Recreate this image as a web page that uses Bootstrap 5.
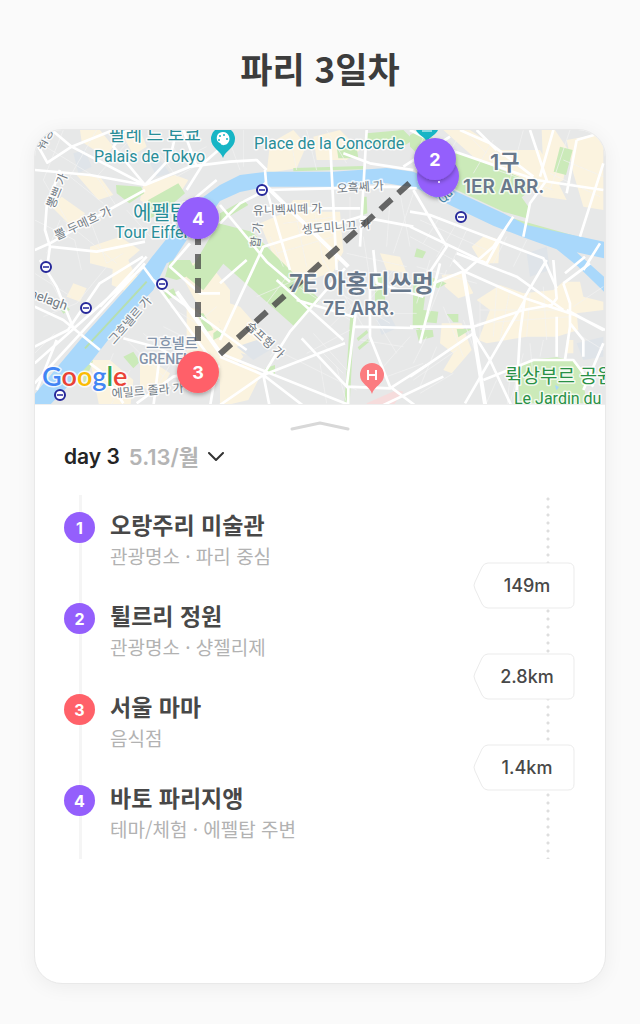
<!DOCTYPE html>
<html lang="ko">
<head>
<meta charset="utf-8">
<meta name="viewport" content="width=device-width, initial-scale=1">
<title>파리 3일차</title>
<link href="https://cdn.jsdelivr.net/npm/bootstrap@5.3.0/dist/css/bootstrap.min.css" rel="stylesheet">
<style>
body{background:#fafafa;font-family:Inter,"Noto Sans CJK KR",sans-serif;color:#484848}
.page{min-height:100vh;padding:44px 34px 40px}
.page-title{font:700 35px/48px "Noto Sans CJK KR",sans-serif;color:#3c3c3c;margin-bottom:37px}
.trip-card{border:1px solid #e9e9e9;border-radius:28px;box-shadow:0 3px 20px rgba(0,0,0,.06);overflow:hidden}
.city-map{width:100%;height:auto;background:#e7e8e8;border-bottom:1px solid #eee}
.city-map text{font-family:Roboto,"Noto Sans CJK KR",sans-serif;paint-order:stroke;stroke:#fff;stroke-opacity:.8;stroke-width:3px;stroke-linejoin:round}
.city-map .poi{fill:#288d98;font-size:16px}
.city-map .area{fill:#68788b;font-weight:600}
.city-map .area text{font-family:Inter,"Noto Sans CJK KR",sans-serif}
.city-map .street{fill:#727b84;font-size:12px;stroke-width:2px}
.city-map .pin-no{font:700 18px Inter,sans-serif;fill:#fff;stroke:none}
.plan{padding:16px 30px 0 29px}
.icon-btn{background:none;border:0;padding:0}
.day-btn{font-size:21px;line-height:32px;font-weight:600;color:#242424;gap:9px;margin-bottom:22px}
.day-date{color:#b4b4b4;font-size:22px}
.stops{background:linear-gradient(#f5f5f5,#f5f5f5) 15px 0/3px 100% no-repeat}
.stop{height:91px;gap:15px;padding-top:17px}
.stop-no{width:31px;height:31px;background:#945ffc;color:#fff;font-size:16px;font-weight:700}
.stop-food{background:#ff6169}
.stop-name{font:700 23px/24px "Noto Sans CJK KR",sans-serif;color:#484848}
.stop-kind{font:400 19px/26px "Noto Sans CJK KR",sans-serif;color:#b2b2b2;margin-top:7px}
.legs{width:102px;padding-top:67px;gap:44px;background:radial-gradient(circle,#dedede 1px,transparent 2px) 73px 0/4px 8px repeat-y}
.leg{width:102px;height:47px;font-size:18px;font-weight:500;padding-left:6px}
</style>
</head>
<body>
<main class="page d-flex flex-column">
<h1 class="page-title text-center">파리 3일차</h1>
<section class="trip-card bg-white flex-grow-1 d-flex flex-column">
<svg class="city-map d-block" viewBox="35 130 570 274" role="img" aria-label="파리 지도">
<defs>
<filter id="lift" x="-30%" y="-30%" width="160%" height="160%"><feDropShadow dx="0" dy="2" stdDeviation="2" flood-opacity=".3"/></filter>
<g id="metro"><circle r="5" fill="#fff" stroke="#26289a" stroke-width="2"/><path d="M-3 0h6" stroke="#5a5cb4" stroke-width="2"/></g>
</defs>
<svg x="30" y="120" width="600" height="290" viewBox="0 0 1800 870">
<!-- built-up blocks -->
<g fill="#fbf3df">
<path d="M150 30l60 0 40 50-25 30-70-45zM140 165l70 5 40 55-45 15zM340 195l95-30 40 15-25 40-90 40-30-20zM65 260l30-30 70 50-40 40zM180 380l90-30 60 40-70 60-80-20zM270 30h60l20 50-40 25z"/>
<path d="M250 420h45l20 45 80 20-60 50-90-40zM440 440l90-20 70 90 0 90-60 10-45-70zM470 560l80 20 90 130-60 70-110-20zM180 720l60 0 70 60-10 90H210zM330 700l90 60-30 60-60-20zM130 490l40 15-20 40-40-15z"/>
<g transform="translate(570)"><path d="M120 310l70-30 30-40h50v35h90l10 120-30 60-200 70-40-60 55-70zM150 70l70-40 40 45-30 70-90 15zM280 50l80-20 60 60-40 30h-90zM480 400l60 10 20 50-60-10zM0 540l60 20 80 90-40 60-100-30zM0 740l80-10 45 30-40 80-85 20z"/></g>
<g transform="translate(1140)"><path d="M100 30l80 0 90 60 120 0 40 70 40 80-70-10-110-80-100-40zM395 30l40 0 40 60-15 90-45 25-15-50zM470 60l110-20v230l-60-10-30-100zM225 345l45 15-5 70-50 0-30-50z"/></g>
<g transform="translate(1140 420)"><path d="M200 120l70-45 70 25 90-10 30-25h50l10 45 60 15v25l-80 10 5 50-65 20h-90l-120 20-25-10 35-90zM95 45l65-5 30 60-45 15-40-35zM95 190l60 0 30 80-60 70-25-10 30-50-40-30zM215 0h35l-15 15zM470 240h20v40h-20z"/></g>
</g>
<!-- parks -->
<g fill="#cbeab9">
<path d="M258 195l75 5 10 20-45 30-38-30zM355 240l90-50 20 30-65 55-60 30z"/>
<path d="M565 310l100 25 205 204-75 82-215-190-60 80-50-40z"/>
<path d="M420 420h60l20 40-60 20-35-10zM400 520l30-15 10 20-30 15zM90 565l20-8 10 12-20 12zM280 710l30-15 20 30-20 20zM500 580l20 0 30 50-20 5zM550 640l20-15 10 20-30 15z"/>
<g transform="translate(570)"><path d="M0 280l70-40 15 15-85 50zM220 144l210-6v10l-210 6zM350 80l60 0 5 35-60 0zM440 40l110-10 30 30-40 25-100-15zM430 230l10 0 2 50-14 5z"/></g>
<g transform="translate(1140)"><path d="M0 45l30-15 100 60 220 90 10 32-25 20 20 28-5 35-70-20-140-65L0 80zM450 80l38 10-20 75-37-10zM20 385l28 10-10 20-25-5zM290 290l220 62-10 5-225-60z"/></g>
<g transform="translate(570 420)"><path d="M392 150l12 2-15 280h-16zM410 235l30-25 5 8-30 25zM413 262l30-25 5 8-30 25zM465 45h30v80h-30zM580 50l20 0v160l-22-10zM135 325l30-10 0 30-25-5z"/></g>
<g transform="translate(1140 420)"><path d="M10 115l35-5-5 40 45 5-5 35-30-3-5 10-35 0zM110 162h35v25h-15zM18 210l50 0 3 20-45 12zM140 207h45l-40 25zM330 430l-5-70 12-45 43-18 60-5 50 10 32 48 5 80zM60 50l50 20-25 15-25-10z"/></g>
<path d="M160 745l30-25-30 80z"/>
</g>
<g fill="#dfe4e9"><path d="M130 100l35-10 20 50-40 20zM360 130l30-10 30 40-40 10zM1490 400l60-20 10 70-60 20zM1640 670l80-20v60l-60 10zM1040 600l40-15 20 40-45 20zM620 680l60-20 40 30-50 30z"/></g>
<path d="M1010 850l90-40 20 5-40 55h-70z" fill="#f6dcdc"/>
<!-- river -->
<path d="M12 825L150 660 330 460 365 412 400 368 500 245 570 195 630 165 710 155H910L1070 144 1150 155 1280 215 1420 280 1490 315 1722 365V415L1640 397 1722 470V515L1645 440 1580 388 1480 352 1390 317 1270 260 1160 205 1070 190 910 200H710L630 216 570 243 540 285 480 345 430 420 410 430 370 510 250 640 180 730 50 865 12 880z" fill="#a9d8fb"/>
<path d="M165 685L350 485" stroke="#b6dfae" stroke-width="6"/>
<path d="M1575 795l12 6-8 10z" fill="#a9d8fb"/>
<!-- lanes -->
<g fill="none" stroke="#f3f3f3" stroke-width="2">
<path d="M14 60l180 110M100 30l-60 150 70 120M200 30l-80 140 100 80M260 260l-60-90 90-100M14 300l120 60 20 90M100 300l160 130M14 460l110 70M40 590l100-40 90-110M14 700l60-60M90 300l-40 100M180 300l50 130 50-30M290 270l80 90M420 60l30 60 80-40M380 90l60 80 90-50M400 620l120 60M340 640l140 120M290 660l110 110M420 560l80 50 60-50M250 700l-40 100M300 750l-60 110M380 800l80-130M60 480l80 150"/>
<path d="M590 40l40 110M640 30l0 110M780 50l20 100M830 30l30 120M890 30l60 100M720 350l40 90M790 250l40 190M850 250l30 180M760 310l160 -20M740 400l170-50M960 230l0 110M1080 240l-10 140M1110 220l30 160M1150 220l-60 180M950 400l180 40M1000 350l20 130M680 530l140-60M710 550l60-80M790 490l170 110M880 420l120 200M930 520l150 90M970 600l120-150M900 620l80-80M850 640l100 110M830 700l130-70M880 700l60 60M780 640l-60 70M760 700l220 110M870 730l20 120M920 740l30 110M1040 600l60 100M1060 580l100 0M990 660l130 20M1060 740l80-90M1070 770l110-40"/>
<path d="M1190 30l-30 70M1280 60l-40 70M1310 40l60 60M1390 60l-60 100M1400 150l170 60M1480 30l-40 150M1620 30l-60 180M1600 120l120 50M1560 160l150 70M1230 290l-50 80M1280 310l-60 100M1310 330l-50 110M1170 300l200 90M1140 350l150 80M1430 350l-40 80M1490 360l-40 80M1160 440l180 50M1200 420l-40 130M1250 450l-60 150M1300 600l60 160M1240 560l60 150M1350 540l0 120M1400 500l-10 150M1440 510l-30 150M1500 520l-10 130M1540 500l10 160M1350 570l260 0M1340 610l280-20M1500 670l10 110M1540 660l-10 50M1150 780l130-90M1170 820l100-60M1400 780l-40 90M1440 770l-10 100M1480 700l-40 150M1630 560l90-60M1640 640l80 50M1190 650l-40 80M1220 680l-50 120"/>
</g>
<!-- avenues -->
<g fill="none" stroke="#fff" stroke-width="8" stroke-linejoin="round">
<path d="M14 150L180 165 345 195 480 140 600 125 680 120 710 150M90 150L50 260 45 330 60 380 50 450M345 210L200 290 60 370 14 390M60 380L200 395 345 365M65 30l60 50 220 115M125 80L52 128 14 60M125 80L250 30M345 195L250 80 285 30M345 195l75-80 20-85M460 30l40 110M470 210l50-80 80-70M400 350l100-120 60-50"/>
<path d="M14 560L100 600 210 690M30 420l50 80 50 125M14 680l100-50 95-140 130-80M14 730L340 440M14 790L345 430M20 810l60-150M340 440L560 740M560 740L540 860M370 480l60 50 220 160M180 730l40 30 60 90M280 655l110 30 100 60M390 700l-20 160M320 850l110-80 140-30M480 370l-60 70 90 80 60 0M350 410L210 560"/>
<path d="M570 310l60-60 80-40 190-5 180-5 80 5M705 150l5 60 70 240M570 255l140 170 70 60M570 660L700 380 860 330 990 290 1150 320M690 265l300 0M900 60l20 390M1010 30l-20 350M940 100l80 30 130 20M1030 390l10 100 140 40M570 490l80-70M800 540l170 50M740 480l200 180M945 670L700 765 570 710M700 765l80-130 165-190M700 765l130 100M700 765l-130 90M700 765l20 100M570 700l400 160M815 655l140 150 0 60M980 550l-30 250 130 5 110-70M1050 860l190-90M1020 500l0 150 60 150 80 60M970 620l180 4"/>
<path d="M1260 50L1120 140M1290 30l90 40 130 100M1340 30l60 60M1140 30l120 60 260 90 200 30M1500 30l50 150-50 70-20 100M1570 30l-40 140M1640 60l70-20M1640 60l-30 160M1720 130l-70 220M1450 290l-60 90-80 70-100 40M1280 400l180 70 140 100M1140 275l60 10 340 130 40 90M1150 210l100 170-60 90M1140 320l230 110 60-110M1710 370l-50 80"/>
<path d="M1140 620h190l150-50 85-15 15-20L1570 420M1270 420l35 35 180 80 150 50 90 45M1550 420l-65 110-15 110-10 170M1485 540l-180 310M1600 490l20 60 0 70-15 100M1600 490l80-60M1605 460l60-50M1330 640L1140 770M1330 640l50 80 70 150M1230 430l-60 240M1580 590l0 120M1620 610l40 50 0 50M1720 670l-60 140M1610 570l110 60M1360 780l150-60 120 0 60 80"/>
<path d="M440 515L575 705M1300 455l30 180 38 235M955 440L700 190" stroke-width="12"/>
</g>
</svg>
<!-- labels -->
<g class="poi"><text x="109" y="141" font-size="18">팔레 드 토쿄</text><text x="94" y="162">Palais de Tokyo</text><text x="254" y="149">Place de la Concorde</text><text x="133" y="220" font-size="20">에펠탑</text><text x="115" y="238">Tour Eiffel</text></g>
<g fill="#8494aa" font-size="14" font-weight="500"><text x="146" y="348">그흐넬르</text><text x="139" y="364">GRENELLE</text></g>
<g fill="#299146" font-size="19"><text x="505" y="383">뤽상부르 공원</text><text x="514" y="404" font-size="16">Le Jardin du</text></g>
<text x="42" y="386" style="font-family:Lato,sans-serif;font-size:27px;font-weight:600"><tspan fill="#4285f4">G</tspan><tspan fill="#ea4335">o</tspan><tspan fill="#fbbc05">o</tspan><tspan fill="#4285f4">g</tspan><tspan fill="#34a853">l</tspan><tspan fill="#ea4335">e</tspan></text>
<g class="street">
<text transform="translate(43 151) rotate(-62)">워싱</text>
<text transform="translate(54 209) rotate(-68)">뽕쁘 가</text>
<text transform="translate(57 240) rotate(-25)">뽈 두메흐 가</text>
<text transform="translate(253 215) rotate(-2)">유니벡씨떼 가</text>
<text transform="translate(337 193) rotate(-4)">오흑쎄 가</text>
<text transform="translate(302 234) rotate(-5)">셍도미니끄 가</text>
<text transform="translate(259 248) rotate(-82)">합 가</text>
<text transform="translate(114 345) rotate(-49)">그흐넬르 가</text>
<text transform="translate(245 327) rotate(43)">슙프헝 가</text>
<text transform="translate(112 398) rotate(-5)">에밀르 졸라 가</text>
<text transform="translate(29 297) rotate(20)" font-size="13">nelagh</text>
<text transform="translate(443 204) rotate(-45)" fill="#4286ad">Qu</text>
</g>
<use href="#metro" x="46" y="267"/><use href="#metro" x="86" y="308"/><use href="#metro" x="162" y="284"/><use href="#metro" x="262" y="190"/><use href="#metro" x="461" y="217"/><use href="#metro" x="60" y="395"/>
<path d="M223 158c-2-7-12-10-12-19a12 12 0 0 1 24 0c0 9-10 12-12 19z" fill="#17b5c5"/>
<path d="M223 132c-5 0-7 4-6 8 1 3 3 2 4 4s4 1 6 0c5-4 2-12-4-12z" fill="#fff"/>
<g fill="#17b5c5"><circle cx="220" cy="136" r="1"/><circle cx="224" cy="135" r="1"/><circle cx="227" cy="139" r="1"/><circle cx="219" cy="140" r="1"/></g>
<path d="M427 142c-2-5-9-7-11-12h22c-2 5-9 7-11 12z" fill="#17b5c5"/><path d="M422 131h10" stroke="#fff"/>
<path d="M372 394c-2-8-12-10-12-19a12 12 0 0 1 24 0c0 9-10 11-12 19z" fill="#fb7c80"/>
<path d="M368 370v10m8-10v10m-8-5h8" stroke="#fff" stroke-width="2"/>
<!-- route and stops -->
<path d="M198 216v128" stroke="#444" stroke-opacity=".75" stroke-width="6" stroke-dasharray="15 9" stroke-dashoffset="-14"/>
<path d="M220 354L413 180" stroke="#444" stroke-opacity=".8" stroke-width="6" stroke-dasharray="15 9"/>
<g class="area"><text x="490" y="170" font-size="22">1구</text><text x="463" y="193" font-size="19">1ER ARR.</text><text x="289" y="292" font-size="24">7E 아홍디쓰멍</text><text x="323" y="315" font-size="19">7E ARR.</text></g>
<g filter="url(#lift)"><circle cx="438" cy="176" r="21" fill="#945ffc"/></g>
<g filter="url(#lift)"><circle cx="435" cy="159" r="21" fill="#945ffc"/></g><circle cx="439" cy="182" r="1" fill="#fff"/>
<g filter="url(#lift)"><circle cx="198" cy="218" r="21" fill="#945ffc"/></g>
<g filter="url(#lift)"><circle cx="198" cy="372" r="21" fill="#ff6169"/></g>
<g text-anchor="middle"><text class="pin-no" x="435" y="166">2</text><text class="pin-no" x="198" y="225">4</text><text class="pin-no" x="198" y="379">3</text></g>
</svg>
<div class="plan">
<button class="icon-btn d-block mx-auto" type="button" aria-label="펼치기"><svg class="d-block" width="60" height="12" viewBox="0 0 60 12" fill="none" stroke="#d8d8d8" stroke-width="3" stroke-linecap="round" stroke-linejoin="round"><path d="M2 8L30 2l28 6"/></svg></button>
<button class="icon-btn day-btn d-flex align-items-center mt-2" type="button"><span>day 3</span><span class="day-date">5.13/월</span><svg width="16" height="10" viewBox="0 0 16 10" fill="none" stroke="#333" stroke-width="2" stroke-linecap="round" stroke-linejoin="round"><path d="M1 1l7 7 7-7"/></svg></button>
<div class="d-flex justify-content-between">
<ol class="stops list-unstyled mb-0">
<li class="stop d-flex"><span class="stop-no rounded-circle d-flex align-items-center justify-content-center">1</span><div><h2 class="stop-name mb-0">오랑주리 미술관</h2><p class="stop-kind mb-0">관광명소 · 파리 중심</p></div></li>
<li class="stop d-flex"><span class="stop-no rounded-circle d-flex align-items-center justify-content-center">2</span><div><h2 class="stop-name mb-0">튈르리 정원</h2><p class="stop-kind mb-0">관광명소 · 샹젤리제</p></div></li>
<li class="stop d-flex"><span class="stop-no stop-food rounded-circle d-flex align-items-center justify-content-center">3</span><div><h2 class="stop-name mb-0">서울 마마</h2><p class="stop-kind mb-0">음식점</p></div></li>
<li class="stop d-flex"><span class="stop-no rounded-circle d-flex align-items-center justify-content-center">4</span><div><h2 class="stop-name mb-0">바토 파리지앵</h2><p class="stop-kind mb-0">테마/체험 · 에펠탑 주변</p></div></li>
</ol>
<div class="legs d-flex flex-column">
<svg width="0" height="0" class="position-absolute" aria-hidden="true"><symbol id="tag" viewBox="0 0 102 47"><path d="M15 1H95q6 0 6 6V40q0 6-6 6H15q-4 0-6-4L2 27q-2-4 0-7L9 5q2-4 6-4z" fill="#fff" stroke="#ebebeb"/></symbol></svg>
<div class="leg position-relative d-flex align-items-center justify-content-center"><svg class="position-absolute top-0 start-0 w-100 h-100"><use href="#tag"/></svg><span class="position-relative">149m</span></div>
<div class="leg position-relative d-flex align-items-center justify-content-center"><svg class="position-absolute top-0 start-0 w-100 h-100"><use href="#tag"/></svg><span class="position-relative">2.8km</span></div>
<div class="leg position-relative d-flex align-items-center justify-content-center"><svg class="position-absolute top-0 start-0 w-100 h-100"><use href="#tag"/></svg><span class="position-relative">1.4km</span></div>
</div>
</div>
</div>
</section>
</main>
<script src="https://cdn.jsdelivr.net/npm/bootstrap@5.3.0/dist/js/bootstrap.bundle.min.js"></script>
</body>
</html>
